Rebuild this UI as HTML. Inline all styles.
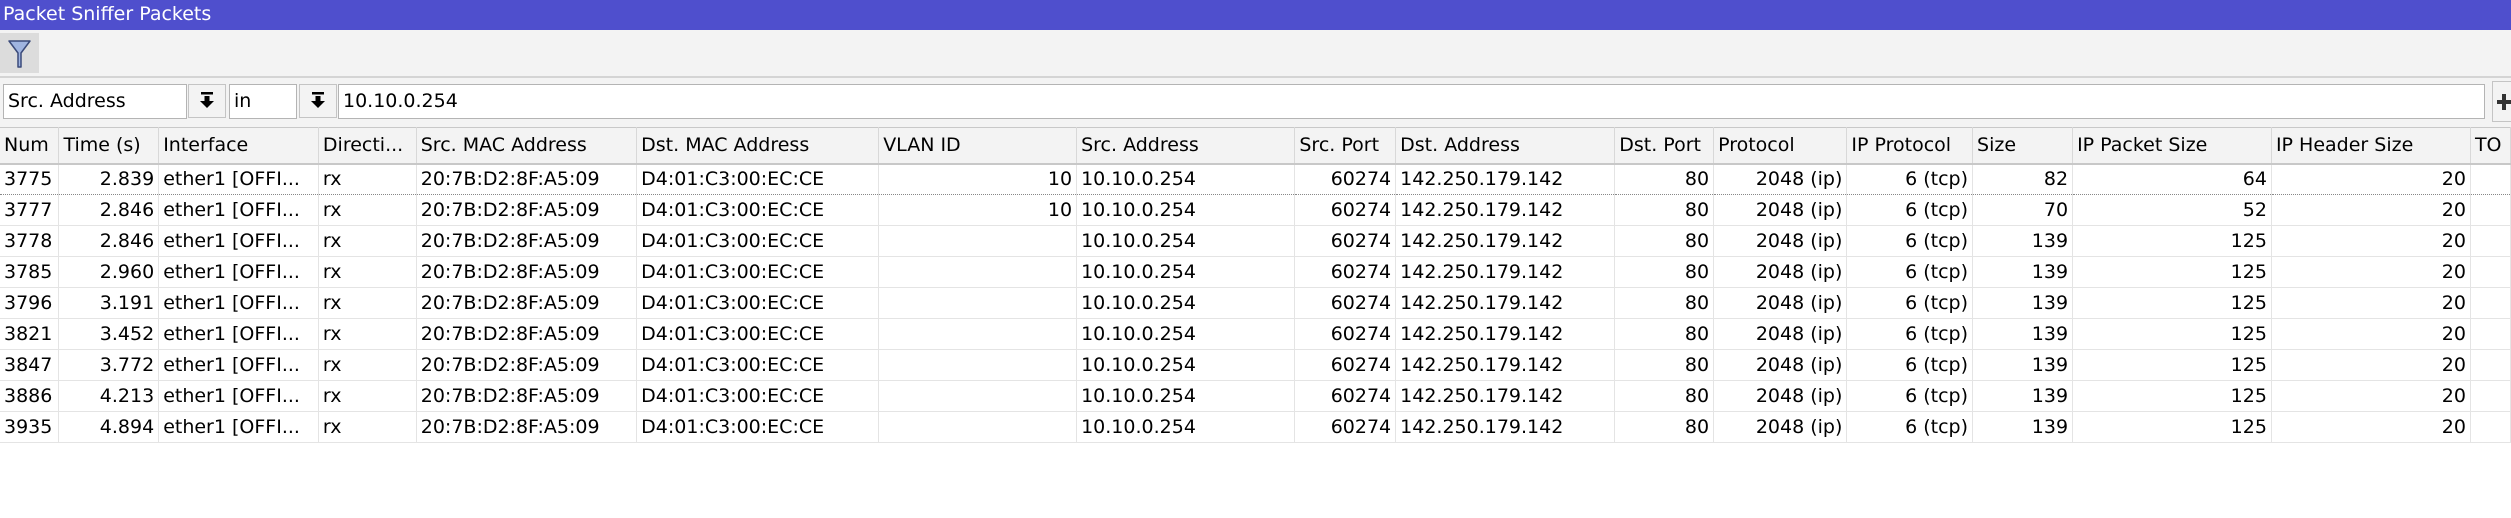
<!DOCTYPE html>
<html><head><meta charset="utf-8">
<style>
*{margin:0;padding:0;box-sizing:border-box}
body{width:2511px;height:518px;background:#fff;font-family:"DejaVu Sans","Liberation Sans",sans-serif;font-size:19px;color:#000;position:relative;overflow:hidden}
.title{position:absolute;left:0;top:0;width:2511px;height:30px;background:#4f4fcd;color:#fff;font-size:19px;line-height:28px;padding-left:3px}
.tool{position:absolute;left:0;top:30px;width:2511px;height:98px;background:#f3f3f3}
.sep{position:absolute;left:0;top:46px;width:2511px;height:2px;background:#d4d4d4}
.fbtn{position:absolute;left:0;top:3px;width:39px;height:40px;background:#dcdcdc}
.box{position:absolute;background:#fff;border:1px solid #b4b4b4;line-height:32px;padding-left:4px}
.btn{position:absolute;background:#f3f3f3;border:1px solid #c4c4c4}
table{position:absolute;left:0;top:127px;border-collapse:collapse;table-layout:fixed}
th{height:36px;background:#f3f3f3;font-weight:normal;text-align:left;padding:0 4px;border-top:1px solid #c8c8c8;border-bottom:2px solid #c8c8c8;border-right:1px solid #d8d8d8;white-space:nowrap;overflow:hidden}
td{height:31px;padding:0 4px;border-bottom:1px solid #e4e4e4;border-right:1px solid #e4e4e4;white-space:nowrap;overflow:hidden}
tr.first td{border-bottom:1px dotted #888}
.r{text-align:right}
</style></head><body>
<div class="title">Packet Sniffer Packets</div>
<div class="tool">
 <div class="fbtn"><svg width="39" height="40" viewBox="0 0 39 40"><path d="M9 8 L30 8 L21 20 L21 34 L18 34 L18 20 Z" fill="#9fb4e0" stroke="#3a4a7a" stroke-width="1.5" stroke-linejoin="round"/></svg></div>
 <div class="sep"></div>
</div>
<div class="box" style="left:3px;top:84px;width:184px;height:35px">Src. Address</div>
<div class="btn" style="left:188px;top:84px;width:38px;height:34px"><svg width="36" height="32"><rect x="12" y="7" width="12" height="2.5" fill="#000"/><rect x="15.5" y="11" width="5" height="5" fill="#000"/><path d="M11 16 L25 16 L18 23 Z" fill="#000"/></svg></div>
<div class="box" style="left:229px;top:84px;width:68px;height:35px">in</div>
<div class="btn" style="left:299px;top:84px;width:38px;height:34px"><svg width="36" height="32"><rect x="12" y="7" width="12" height="2.5" fill="#000"/><rect x="15.5" y="11" width="5" height="5" fill="#000"/><path d="M11 16 L25 16 L18 23 Z" fill="#000"/></svg></div>
<div class="box" style="left:338px;top:84px;width:2147px;height:35px">10.10.0.254</div>
<div class="btn" style="left:2492px;top:81px;width:30px;height:41px"><svg width="20" height="40"><rect x="4" y="18" width="14" height="4" fill="#333"/><rect x="9" y="12" width="4" height="16" fill="#333"/></svg></div>
<table>
<colgroup><col style="width:59px"><col style="width:100px"><col style="width:160px"><col style="width:98px"><col style="width:221px"><col style="width:243px"><col style="width:200px"><col style="width:220px"><col style="width:101px"><col style="width:220px"><col style="width:99px"><col style="width:134px"><col style="width:126px"><col style="width:101px"><col style="width:200px"><col style="width:200px"><col style="width:40px"></colgroup>
<tr><th>Num</th><th>Time (s)</th><th>Interface</th><th>Directi...</th><th>Src. MAC Address</th><th>Dst. MAC Address</th><th>VLAN ID</th><th>Src. Address</th><th>Src. Port</th><th>Dst. Address</th><th>Dst. Port</th><th>Protocol</th><th>IP Protocol</th><th>Size</th><th>IP Packet Size</th><th>IP Header Size</th><th>TO</th></tr>
<tr class="first"><td>3775</td><td class="r">2.839</td><td>ether1 [OFFI...</td><td>rx</td><td>20:7B:D2:8F:A5:09</td><td>D4:01:C3:00:EC:CE</td><td class="r">10</td><td>10.10.0.254</td><td class="r">60274</td><td>142.250.179.142</td><td class="r">80</td><td class="r">2048 (ip)</td><td class="r">6 (tcp)</td><td class="r">82</td><td class="r">64</td><td class="r">20</td><td></td></tr>
<tr><td>3777</td><td class="r">2.846</td><td>ether1 [OFFI...</td><td>rx</td><td>20:7B:D2:8F:A5:09</td><td>D4:01:C3:00:EC:CE</td><td class="r">10</td><td>10.10.0.254</td><td class="r">60274</td><td>142.250.179.142</td><td class="r">80</td><td class="r">2048 (ip)</td><td class="r">6 (tcp)</td><td class="r">70</td><td class="r">52</td><td class="r">20</td><td></td></tr>
<tr><td>3778</td><td class="r">2.846</td><td>ether1 [OFFI...</td><td>rx</td><td>20:7B:D2:8F:A5:09</td><td>D4:01:C3:00:EC:CE</td><td></td><td>10.10.0.254</td><td class="r">60274</td><td>142.250.179.142</td><td class="r">80</td><td class="r">2048 (ip)</td><td class="r">6 (tcp)</td><td class="r">139</td><td class="r">125</td><td class="r">20</td><td></td></tr>
<tr><td>3785</td><td class="r">2.960</td><td>ether1 [OFFI...</td><td>rx</td><td>20:7B:D2:8F:A5:09</td><td>D4:01:C3:00:EC:CE</td><td></td><td>10.10.0.254</td><td class="r">60274</td><td>142.250.179.142</td><td class="r">80</td><td class="r">2048 (ip)</td><td class="r">6 (tcp)</td><td class="r">139</td><td class="r">125</td><td class="r">20</td><td></td></tr>
<tr><td>3796</td><td class="r">3.191</td><td>ether1 [OFFI...</td><td>rx</td><td>20:7B:D2:8F:A5:09</td><td>D4:01:C3:00:EC:CE</td><td></td><td>10.10.0.254</td><td class="r">60274</td><td>142.250.179.142</td><td class="r">80</td><td class="r">2048 (ip)</td><td class="r">6 (tcp)</td><td class="r">139</td><td class="r">125</td><td class="r">20</td><td></td></tr>
<tr><td>3821</td><td class="r">3.452</td><td>ether1 [OFFI...</td><td>rx</td><td>20:7B:D2:8F:A5:09</td><td>D4:01:C3:00:EC:CE</td><td></td><td>10.10.0.254</td><td class="r">60274</td><td>142.250.179.142</td><td class="r">80</td><td class="r">2048 (ip)</td><td class="r">6 (tcp)</td><td class="r">139</td><td class="r">125</td><td class="r">20</td><td></td></tr>
<tr><td>3847</td><td class="r">3.772</td><td>ether1 [OFFI...</td><td>rx</td><td>20:7B:D2:8F:A5:09</td><td>D4:01:C3:00:EC:CE</td><td></td><td>10.10.0.254</td><td class="r">60274</td><td>142.250.179.142</td><td class="r">80</td><td class="r">2048 (ip)</td><td class="r">6 (tcp)</td><td class="r">139</td><td class="r">125</td><td class="r">20</td><td></td></tr>
<tr><td>3886</td><td class="r">4.213</td><td>ether1 [OFFI...</td><td>rx</td><td>20:7B:D2:8F:A5:09</td><td>D4:01:C3:00:EC:CE</td><td></td><td>10.10.0.254</td><td class="r">60274</td><td>142.250.179.142</td><td class="r">80</td><td class="r">2048 (ip)</td><td class="r">6 (tcp)</td><td class="r">139</td><td class="r">125</td><td class="r">20</td><td></td></tr>
<tr><td>3935</td><td class="r">4.894</td><td>ether1 [OFFI...</td><td>rx</td><td>20:7B:D2:8F:A5:09</td><td>D4:01:C3:00:EC:CE</td><td></td><td>10.10.0.254</td><td class="r">60274</td><td>142.250.179.142</td><td class="r">80</td><td class="r">2048 (ip)</td><td class="r">6 (tcp)</td><td class="r">139</td><td class="r">125</td><td class="r">20</td><td></td></tr>
</table>
</body></html>
